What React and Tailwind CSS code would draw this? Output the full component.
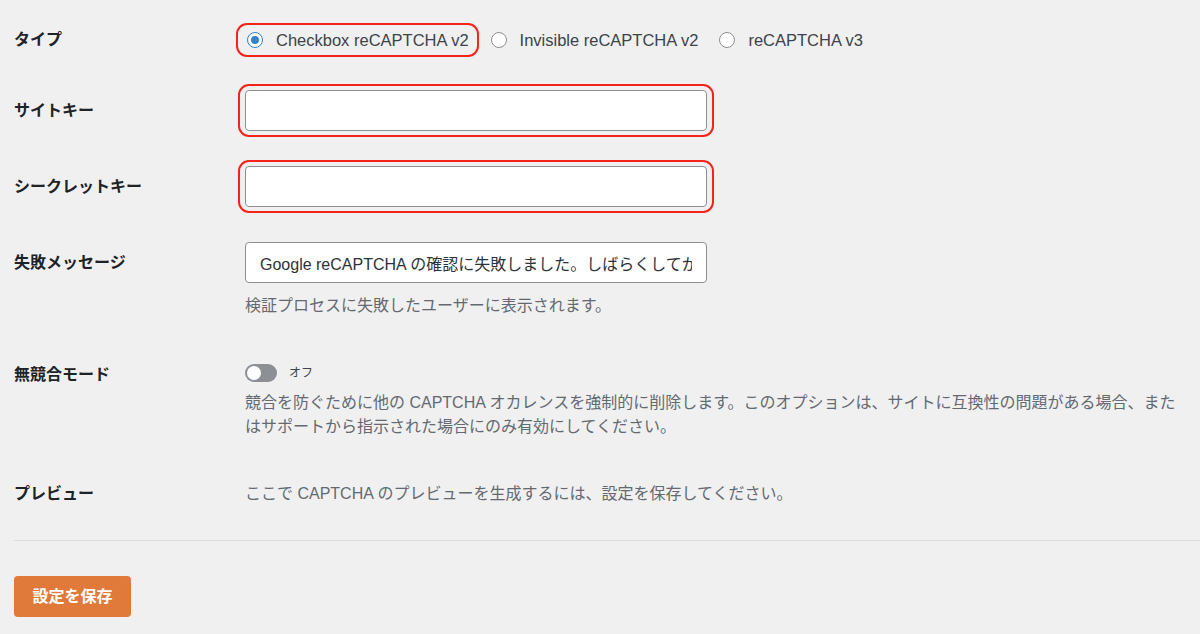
import React from "react";

const font = "font-['Liberation_Sans','Noto_Sans_CJK_JP',sans-serif]";

function Radio({ label, checked }) {
  return (
    <label className="flex items-center gap-[13px] text-[16.5px] text-[#3c434a]">
      <span
        className={
          "w-4 h-4 rounded-full border bg-white flex items-center justify-center " +
          (checked ? "border-[#3582c4]" : "border-[#8c8f94]")
        }
      >
        {checked && <span className="w-2 h-2 rounded-full bg-[#3582c4]" />}
      </span>
      <span>{label}</span>
    </label>
  );
}

function Row({ label, labelClass = "", children, className = "" }) {
  return (
    <div className={"flex " + className}>
      <div className={"w-[231px] shrink-0 text-[16px] font-bold text-[#1d2327] " + labelClass}>{label}</div>
      <div className="flex-1 min-w-0">{children}</div>
    </div>
  );
}

function Field({ value = "" }) {
  return (
    <input
      type="text"
      defaultValue={value}
      readOnly
      className="block w-[462px] h-[41px] bg-white border border-[#8c8f94] rounded-[4px] px-[14px] text-[16px] text-[#2c3338] outline-none"
    />
  );
}

export default function App() {
  return (
    <div className={"min-h-screen bg-[#f0f0f0] pl-[14px] " + font}>
      <Row label="タイプ" labelClass="leading-[34px]" className="pt-[23px]">
        <div className="flex items-center gap-[12px]">
          <div className="-ml-[9px] h-[34px] pl-[9px] pr-[8px] flex items-center border-2 border-[#f4231c] rounded-[11px]">
            <Radio label="Checkbox reCAPTCHA v2" checked />
          </div>
          <div className="flex items-center gap-[21px]">
            <Radio label="Invisible reCAPTCHA v2" />
            <Radio label="reCAPTCHA v3" />
          </div>
        </div>
      </Row>

      <Row label="サイトキー" labelClass="leading-[53px]" className="mt-[27px]">
        <div className="-ml-[7px] w-[476px] border-2 border-[#f4231c] rounded-[11px] px-[5px] py-[4px]">
          <Field />
        </div>
      </Row>

      <Row label="シークレットキー" labelClass="leading-[53px]" className="mt-[23px]">
        <div className="-ml-[7px] w-[476px] border-2 border-[#f4231c] rounded-[11px] px-[5px] py-[4px]">
          <Field />
        </div>
      </Row>

      <Row label="失敗メッセージ" labelClass="leading-[41px]" className="mt-[29px]">
        <Field value="Google reCAPTCHA の確認に失敗しました。しばらくしてからもう一度お試しください。" />
        <p className="mt-[11px] text-[16px] leading-[24px] text-[#646970]">
          検証プロセスに失敗したユーザーに表示されます。
        </p>
      </Row>

      <Row label="無競合モード" labelClass="leading-[24px]" className="mt-[45px]">
        <div className="flex items-center gap-[12px] h-[20px]">
          <span className="relative w-[32px] h-[18px] rounded-full bg-[#8c8f94]">
            <span className="absolute left-[2px] top-[2px] w-[14px] h-[14px] rounded-full bg-white" />
          </span>
          <span className="text-[12px] text-[#3c434a]">オフ</span>
        </div>
        <p className="mt-[8px] text-[16px] leading-[24px] text-[#646970] whitespace-nowrap">
          <span className="block">競合を防ぐために他の CAPTCHA オカレンスを強制的に削除します。このオプションは、サイトに互換性の問題がある場合、また</span>
          <span className="block">はサポートから指示された場合にのみ有効にしてください。</span>
        </p>
      </Row>

      <Row label="プレビュー" labelClass="leading-[24px]" className="mt-[43px]">
        <p className="text-[16px] leading-[24px] text-[#646970]">
          ここで CAPTCHA のプレビューを生成するには、設定を保存してください。
        </p>
      </Row>

      <hr className="mt-[34px] border-0 border-t border-[#dcdcde]" />

      <button className="mt-[35px] w-[117px] h-[41px] rounded-[4px] bg-[#e07a3a] text-white text-[16px] font-bold">
        設定を保存
      </button>
    </div>
  );
}
